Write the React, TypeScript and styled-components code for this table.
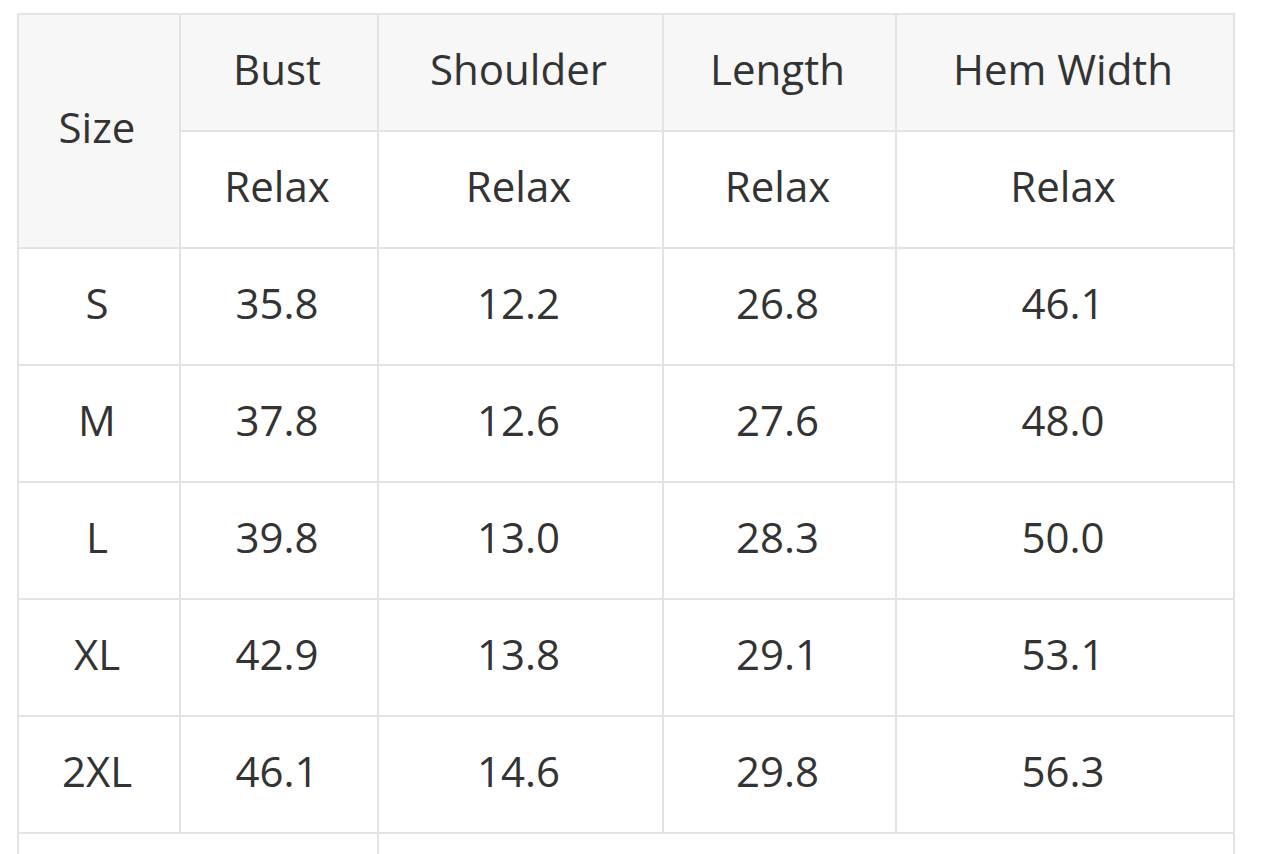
import React from "react";
import styled, { createGlobalStyle } from "styled-components";

type Row = {
  size: string;
  bust: string;
  shoulder: string;
  length: string;
  hem: string;
};

const rows: Row[] = [
  { size: "S", bust: "35.8", shoulder: "12.2", length: "26.8", hem: "46.1" },
  { size: "M", bust: "37.8", shoulder: "12.6", length: "27.6", hem: "48.0" },
  { size: "L", bust: "39.8", shoulder: "13.0", length: "28.3", hem: "50.0" },
  { size: "XL", bust: "42.9", shoulder: "13.8", length: "29.1", hem: "53.1" },
  { size: "2XL", bust: "46.1", shoulder: "14.6", length: "29.8", hem: "56.3" },
];

const columns = [
  { key: "size", label: "Size", width: 162 },
  { key: "bust", label: "Bust", width: 198 },
  { key: "shoulder", label: "Shoulder", width: 285 },
  { key: "length", label: "Length", width: 233 },
  { key: "hem", label: "Hem Width", width: 338 },
];

const App: React.FC = () => {
  return (
    <>
      <GlobalStyle />
      <Page>
        <SizeTable>
          <colgroup>
            {columns.map((col) => (
              <col key={col.key} style={{ width: col.width }} />
            ))}
          </colgroup>
          <thead>
            <tr>
              <HeadCell rowSpan={2}>Size</HeadCell>
              {columns.slice(1).map((col) => (
                <HeadCell key={col.key}>{col.label}</HeadCell>
              ))}
            </tr>
            <tr>
              {columns.slice(1).map((col) => (
                <Cell key={col.key}>Relax</Cell>
              ))}
            </tr>
          </thead>
          <tbody>
            {rows.map((row) => (
              <tr key={row.size}>
                <Cell>{row.size}</Cell>
                <Cell>{row.bust}</Cell>
                <Cell>{row.shoulder}</Cell>
                <Cell>{row.length}</Cell>
                <Cell>{row.hem}</Cell>
              </tr>
            ))}
            <tr>
              <Cell colSpan={2} />
              <Cell colSpan={3} />
            </tr>
          </tbody>
        </SizeTable>
      </Page>
    </>
  );
};

const GlobalStyle = createGlobalStyle`
  html, body {
    margin: 0;
    padding: 0;
    background: #fff;
    overflow: hidden;
  }
`;

const Page = styled.div`
  padding: 13px 0 0 17px;
  font-family: "Open Sans", "Liberation Sans", sans-serif;
  color: #333;
`;

const SizeTable = styled.table`
  width: 1216px;
  table-layout: fixed;
  border-collapse: collapse;

  tr {
    height: 117px;
  }
`;

const Cell = styled.td`
  border: 2px solid #e3e3e3;
  text-align: center;
  vertical-align: middle;
  font-size: 42px;
  font-weight: 400;
  padding: 0 4px 9px 0;
  background: #fff;
`;

const HeadCell = styled.th`
  border: 2px solid #e3e3e3;
  text-align: center;
  vertical-align: middle;
  font-size: 42px;
  font-weight: 400;
  padding: 0 4px 9px 0;
  background: #f7f7f7;
`;

export default App;
